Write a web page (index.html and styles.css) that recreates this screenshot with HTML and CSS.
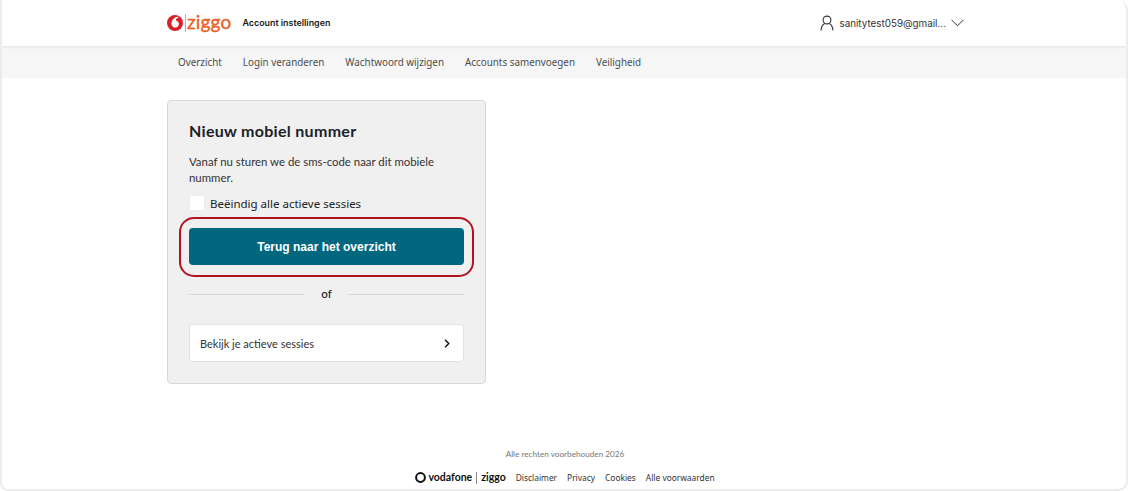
FILE: index.html
```html
<!DOCTYPE html>
<html lang="nl">
<head>
<meta charset="utf-8">
<title>Account instellingen</title>
<link rel="stylesheet" href="styles.css">
</head>
<body>
<div class="frame">
  <header class="topbar">
    <div class="brand">
      <svg class="mark" width="16" height="16" viewBox="0 0 16 16"><circle cx="8" cy="8" r="8" fill="#d8202a"/><path d="M11.2 1.7C9 1.9 6.4 3 5.2 5.4 3.6 8.4 4.6 12.3 8 12.6c2.400.2 3.900-1.600 3.900-3.500 0-1.900-1.200-3.100-3-3.500 0-1.700 1.200-3 2.900-3.300z" fill="#fff"/></svg>
      <span class="brand-sep"></span>
      <span class="ziggo">ziggo</span>
      <span class="brand-title">Account instellingen</span>
    </div>
    <div class="user">
      <svg width="14" height="16" viewBox="0 0 14 16" fill="none" stroke="#333" stroke-width="1.100"><circle cx="7" cy="5" r="3.900"/><path d="M1 15.500c.3-3.500 2-6 3.600-6.900M13 15.500c-.3-3.500-2-6-3.600-6.900"/></svg>
      <span class="user-name">sanitytest059@gmail...</span>
      <svg class="caret" width="13" height="8" viewBox="0 0 13 8" fill="none" stroke="#333" stroke-width="1"><path d="M.5.800l6 6 6-6"/></svg>
    </div>
  </header>
  <nav class="tabs">
    <a>Overzicht</a>
    <a>Login veranderen</a>
    <a>Wachtwoord wijzigen</a>
    <a>Accounts samenvoegen</a>
    <a>Veiligheid</a>
  </nav>
  <main class="content">
    <section class="card">
      <h1>Nieuw mobiel nummer</h1>
      <p>Vanaf nu sturen we de sms-code naar dit mobiele nummer.</p>
      <label class="check"><span class="box"></span><span>Beëindig alle actieve sessies</span></label>
      <div class="primary-wrap">
        <button class="primary">Terug naar het overzicht</button>
        <span class="ring"></span>
      </div>
      <div class="divider"><span>of</span></div>
      <a class="link-row"><span>Bekijk je actieve sessies</span>
        <svg width="6" height="9" viewBox="0 0 6 9" fill="none" stroke="#111" stroke-width="1.400"><path d="M1 .7l3.800 3.800L1 8.300"/></svg>
      </a>
    </section>
  </main>
  <footer class="foot">
    <div class="rights">Alle rechten voorbehouden 2026</div>
    <div class="foot-links">
      <span class="vz">
        <svg width="11" height="11" viewBox="0 0 11 11"><circle cx="5.500" cy="5.500" r="4.400" fill="none" stroke="#111" stroke-width="2"/></svg>
        <b>vodafone</b><i></i><b>ziggo</b>
      </span>
      <a>Disclaimer</a><a>Privacy</a><a>Cookies</a><a>Alle voorwaarden</a>
    </div>
  </footer>
</div>
</body>
</html>
```
FILE: styles.css
```css
* { box-sizing: border-box; }
html, body { margin: 0; height: 100%; }
body { background: #fff; font-family: "Lato", "Liberation Sans", sans-serif; color: #222; }
.frame {
  height: 491px;
  display: flex;
  flex-direction: column;
  border: 2px solid #ececec;
  border-top-width: 0;
  border-radius: 0 10px 10px 8px;
  overflow: hidden;
}
.topbar {
  height: 46px;
  flex: none;
  display: flex;
  align-items: center;
  justify-content: space-between;
  padding: 0 162px 0 165px;
  background: #fff;
  box-shadow: 0 1px 3px rgba(0,0,0,.08);
  position: relative;
}
.brand { display: flex; align-items: center; }
.brand-sep { width: 1px; height: 18px; background: #e9a36f; margin: 0 1px 0 2px; }
.ziggo {
  font-size: 19px;
  font-weight: 400;
  -webkit-text-stroke: .35px #e8611e;
  color: #e8611e;
  line-height: 18px;
  margin-bottom: 3px;
  letter-spacing: .2px;
}
.brand-title { font-family: "Inter", sans-serif; font-size: 8.900px; font-weight: 600; color: #1a1a1a; margin: 0 0 1px 11px; }
.user { display: flex; align-items: center; font-family: "Inter", sans-serif; font-size: 9.850px; color: #333; }
.user-name { margin: 0 5px 0 5px; }
.tabs {
  height: 32px;
  flex: none;
  background: #f6f6f6;
  display: flex;
  align-items: center;
  gap: 21px;
  padding-left: 176px;
  font-family: "Noto Sans", sans-serif;
  font-size: 9.850px;
  color: #4a4d4e;
}
.content { padding: 22px 0 0 165px; }
.card {
  width: 319px;
  height: 284px;
  background: #f0f0f0;
  border: 1px solid #d8d8d8;
  border-radius: 4px;
  padding: 20px 21px 0;
}
h1 { margin: 0; font-size: 16px; line-height: 20px; font-weight: 700; color: #1b2228; letter-spacing: .3px; }
p { margin: 13px 0 0; font-size: 11.400px; line-height: 16px; color: #333; }
.check { display: flex; align-items: center; gap: 5px; margin-top: 9px; font-family: "Noto Sans", sans-serif; font-size: 11.500px; color: #222; }
.box { width: 16px; height: 16px; background: #fff; border: 1px solid #ececec; border-radius: 2px; }
.primary-wrap { position: relative; margin-top: 17px; }
.primary {
  display: block;
  width: 275px;
  height: 37px;
  border: 0;
  border-radius: 4px;
  background: #00677f;
  color: #fff;
  font-family: "Liberation Sans", sans-serif;
  font-size: 12px;
  font-weight: 700;
}
.ring {
  position: absolute;
  inset: -11px -10px -12px;
  border: 2px solid #b3131f;
  border-radius: 15px;
}
.divider { display: flex; align-items: center; gap: 16px; margin-top: 21px; font-size: 11.500px; font-weight: 500; color: #222; line-height: 16px; }
.divider::before, .divider::after { content: ""; flex: 1; height: 1px; background: #d9d9d9; }
.link-row {
  display: flex;
  align-items: center;
  justify-content: space-between;
  height: 38px;
  margin-top: 22px;
  padding: 0 13px 0 10px;
  background: #fff;
  border: 1px solid #e2e2e2;
  border-radius: 3px;
  font-size: 11px;
  color: #333;
}
.foot { margin-top: auto; padding: 0 0 5px 2px; text-align: center; }
.rights { font-size: 8.200px; color: #777; }
.foot-links { display: flex; justify-content: center; align-items: center; gap: 10px; margin-top: 12px; font-family: "Noto Sans", sans-serif; font-size: 8.400px; color: #333; line-height: 13px; }
.vz { display: inline-flex; align-items: center; font-family: "Lato", sans-serif; font-size: 10.500px; color: #111; gap: 2px; }
.vz i { width: 1px; height: 12px; background: #888; margin: 0 2px; }
```
